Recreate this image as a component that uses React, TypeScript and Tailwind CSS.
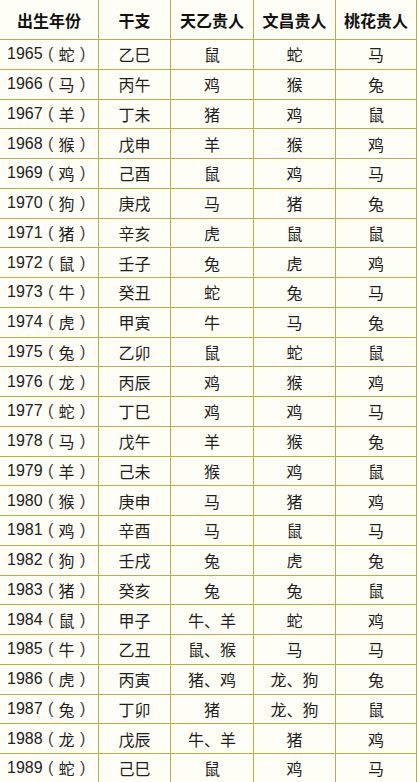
import React from "react";

const rows: string[][] = [
  ["1965", "蛇", "乙巳", "鼠", "蛇", "马"],
  ["1966", "马", "丙午", "鸡", "猴", "兔"],
  ["1967", "羊", "丁未", "猪", "鸡", "鼠"],
  ["1968", "猴", "戊申", "羊", "猴", "鸡"],
  ["1969", "鸡", "己酉", "鼠", "鸡", "马"],
  ["1970", "狗", "庚戌", "马", "猪", "兔"],
  ["1971", "猪", "辛亥", "虎", "鼠", "鼠"],
  ["1972", "鼠", "壬子", "兔", "虎", "鸡"],
  ["1973", "牛", "癸丑", "蛇", "兔", "马"],
  ["1974", "虎", "甲寅", "牛", "马", "兔"],
  ["1975", "兔", "乙卯", "鼠", "蛇", "鼠"],
  ["1976", "龙", "丙辰", "鸡", "猴", "鸡"],
  ["1977", "蛇", "丁巳", "鸡", "鸡", "马"],
  ["1978", "马", "戊午", "羊", "猴", "兔"],
  ["1979", "羊", "己未", "猴", "鸡", "鼠"],
  ["1980", "猴", "庚申", "马", "猪", "鸡"],
  ["1981", "鸡", "辛酉", "马", "鼠", "马"],
  ["1982", "狗", "壬戌", "兔", "虎", "兔"],
  ["1983", "猪", "癸亥", "兔", "兔", "鼠"],
  ["1984", "鼠", "甲子", "牛、羊", "蛇", "鸡"],
  ["1985", "牛", "乙丑", "鼠、猴", "马", "马"],
  ["1986", "虎", "丙寅", "猪、鸡", "龙、狗", "兔"],
  ["1987", "兔", "丁卯", "猪", "龙、狗", "鼠"],
  ["1988", "龙", "戊辰", "牛、羊", "猪", "鸡"],
  ["1989", "蛇", "己巳", "鼠", "鸡", "马"],
];

const header = ["出生年份", "干支", "天乙贵人", "文昌贵人", "桃花贵人"];

const cell = "flex items-center border-r border-b border-[#bcae45] text-[16px] text-[#1f1f1f]";

export default function App() {
  return (
    <div
      className="w-[419px] h-[782px] overflow-hidden bg-[#fffef8]"
      style={{ fontFamily: '"Noto Sans CJK SC", "Noto Sans", sans-serif' }}
    >
      <div className="grid w-[417px] grid-cols-[99px_72px_83px_82px_81px] grid-rows-[40px_repeat(25,29.75px)] bg-[#fffef6]">
        {header.map((h, i) => (
          <div
            key={"h" + i}
            className="flex items-center justify-center border-r border-b border-[#bcae45] text-[16px] font-bold text-[#111]"
          >
            {h}
          </div>
        ))}
        {rows.map((r, ri) => (
          <React.Fragment key={ri}>
            <div className={cell + " justify-start pl-[7px] whitespace-nowrap"}>
              <span className="font-['Liberation_Sans',sans-serif] text-[16px] text-[#222]">{r[0]}</span>
              <span className="inline-block w-[16px] text-center font-['Liberation_Sans',sans-serif] font-light text-[#444]">(</span>
              <span>{r[1]}</span>
              <span className="inline-block w-[16px] text-center font-['Liberation_Sans',sans-serif] font-light text-[#444]">)</span>
            </div>
            {r.slice(2).map((c, ci) => (
              <div key={ci} className={cell + " justify-center"}>
                {c}
              </div>
            ))}
          </React.Fragment>
        ))}
      </div>
    </div>
  );
}
